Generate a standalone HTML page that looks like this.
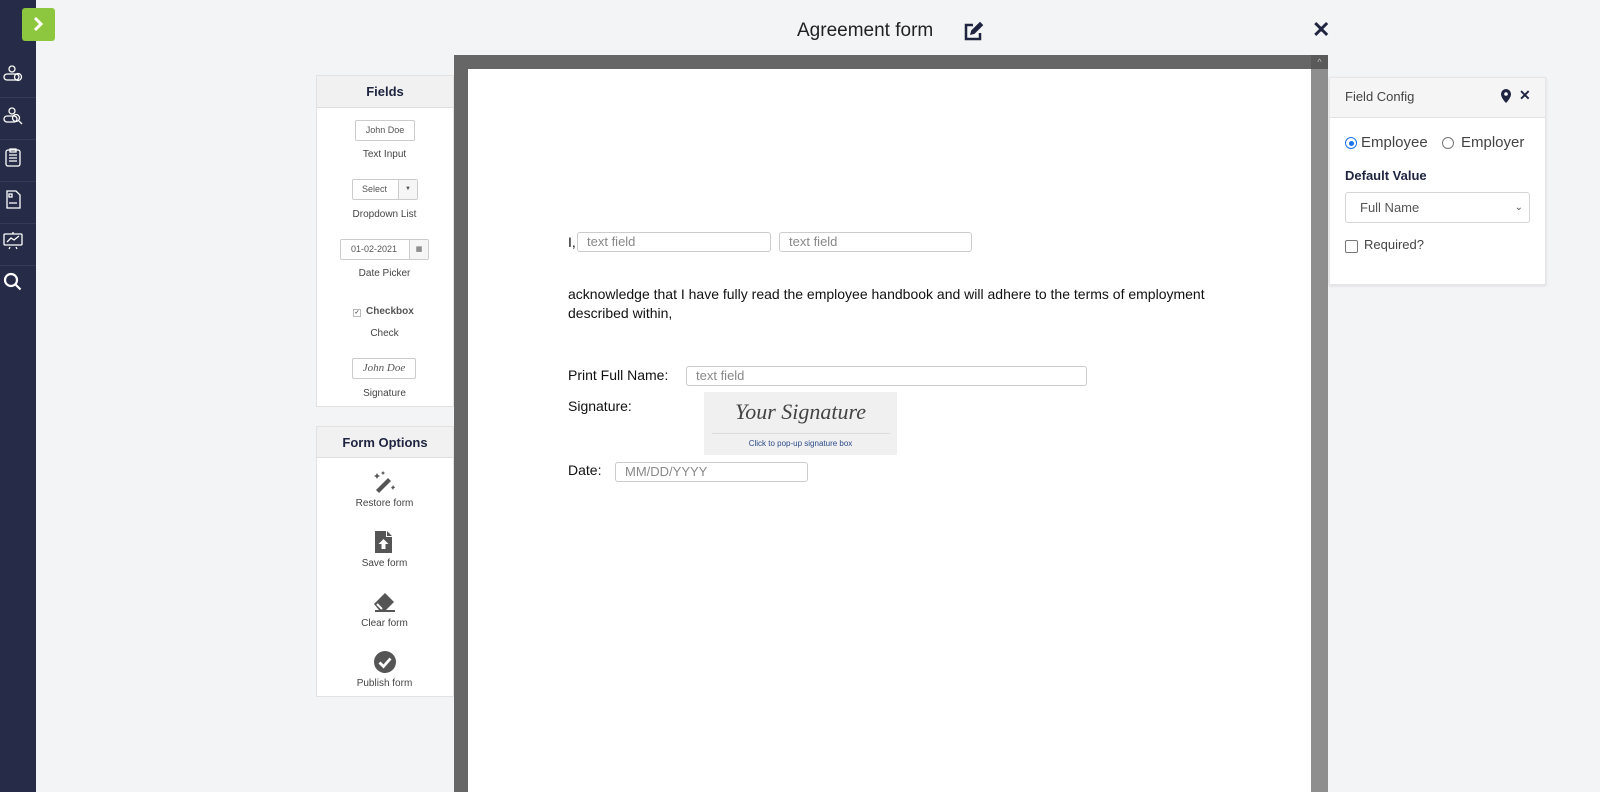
<!DOCTYPE html>
<html><head><style>
*{box-sizing:border-box;margin:0;padding:0}
body{width:1600px;height:792px;overflow:hidden;background:#f3f4f6;font-family:"Liberation Sans",sans-serif;position:relative;color:#333}
.abs{position:absolute}
.side{left:0;top:0;width:36px;height:792px;background:#262b47}
.sico{left:3px;width:20px;height:20px;stroke:#fff;fill:none;stroke-width:1.3}
.sep{left:0;width:36px;height:1px;background:#353a57}
.panel{background:#fff;border:1px solid #e2e2e2}
.ph{background:#f1f1f1;border-bottom:1px solid #ddd;text-align:center;font-size:13px;font-weight:bold;color:#1f2540}
.lbl{width:137px;text-align:center;font-size:10px;color:#444}
.mini{border:1px solid #ccc;border-radius:2px;background:#fff;font-size:9px;color:#555;text-align:center}
.mini span{position:absolute;top:0;right:0;height:19px;border-left:1px solid #ccc;background:#f6f6f6;text-align:center}
.tf{border:1px solid #ccc;border-radius:3px;font-size:13px;color:#888;padding-left:9px;height:20px;line-height:18px;background:#fff}
.doc{font-size:14px;color:#111}
</style></head><body>
<div class="abs side"></div>
<div class="abs" style="left:22px;top:8px;width:33px;height:33px;background:#8dc63f;border-radius:3px"></div>
<svg class="abs" style="left:28px;top:14px" width="20" height="20" viewBox="0 0 20 20"><path d="M7 4l6 6-6 6" stroke="#fff" stroke-width="3" fill="none"/></svg>
<svg class="abs sico" style="top:64px" viewBox="0 0 20 20"><circle cx="9" cy="5" r="3"/><rect x="1" y="10" width="15" height="6" rx="3"/><circle cx="15" cy="13" r="3.5"/></svg>
<div class="abs sep" style="top:97px"></div>
<svg class="abs sico" style="top:106px" viewBox="0 0 20 20"><circle cx="9" cy="5" r="3"/><rect x="1" y="10" width="13" height="6" rx="3"/><circle cx="13" cy="12" r="3.5"/><path d="M16 15l3 3"/></svg>
<div class="abs sep" style="top:139px"></div>
<svg class="abs sico" style="top:147px" viewBox="0 0 20 20"><rect x="3" y="3" width="14" height="16" rx="2"/><path d="M7 2h6v3H7zM6 8h8M6 11h8M6 14h8"/></svg>
<div class="abs sep" style="top:181px"></div>
<svg class="abs sico" style="top:189px" viewBox="0 0 20 20"><path d="M4 2h9l4 4v13H4z"/><path d="M6 5h3v3H6zM6 14h8"/></svg>
<div class="abs sep" style="top:223px"></div>
<svg class="abs sico" style="top:230px" viewBox="0 0 20 20"><rect x="1" y="4" width="18" height="11" rx="1"/><path d="M4 12l4-4 3 2 5-4M7 17l-1 2M13 17l1 2M10 2v2"/></svg>
<div class="abs sep" style="top:265px"></div>
<svg class="abs sico" style="top:272px;stroke-width:2.2" viewBox="0 0 20 20"><circle cx="8" cy="8" r="6"/><path d="M12.5 12.5l5 5"/></svg>

<div class="abs" style="left:797px;top:20px;font-size:19px;color:#222">Agreement form</div>
<svg class="abs" style="left:963px;top:21px" width="22" height="20" viewBox="0 0 22 20"><path d="M10 4H3v14h14v-6" stroke="#1f2540" stroke-width="2.5" fill="none"/><path d="M7 14l1.2-4.5L17 0.8l3.3 3.3-8.8 8.8z" fill="#1f2540"/></svg>
<div class="abs" style="left:1312px;top:17px;font-size:22px;font-weight:bold;color:#1f2540">✕</div>

<div class="abs" style="left:454px;top:55px;width:874px;height:737px;background:#666"></div>
<div class="abs" style="left:1311px;top:55px;width:17px;height:737px;background:#8e8e8e"></div>
<div class="abs" style="left:1311px;top:55px;width:17px;height:14px;background:#5a5a5a;color:#bbb;font-size:9px;text-align:center;line-height:14px">^</div>
<div class="abs" style="left:468px;top:69px;width:843px;height:723px;background:#fff"></div>

<div class="abs doc" style="left:568px;top:234px">I,</div>
<div class="abs tf" style="left:577px;top:232px;width:194px">text field</div>
<div class="abs tf" style="left:779px;top:232px;width:193px">text field</div>
<div class="abs doc" style="left:568px;top:285px;line-height:19px;width:680px">acknowledge that I have fully read the employee handbook and will adhere to the terms of employment described within,</div>
<div class="abs doc" style="left:568px;top:367px">Print Full Name:</div>
<div class="abs tf" style="left:686px;top:366px;width:401px">text field</div>
<div class="abs doc" style="left:568px;top:398px">Signature:</div>
<div class="abs" style="left:704px;top:392px;width:193px;height:63px;background:#f0f0f0"></div>
<div class="abs" style="left:704px;top:399px;width:193px;text-align:center;font-family:'Liberation Serif',serif;font-style:italic;font-size:22px;color:#444">Your Signature</div>
<div class="abs" style="left:712px;top:433px;width:178px;height:1px;background:#ddd"></div>
<div class="abs" style="left:704px;top:439px;width:193px;text-align:center;font-size:8px;color:#2b4a8a">Click to pop-up signature box</div>
<div class="abs doc" style="left:568px;top:462px">Date:</div>
<div class="abs tf" style="left:615px;top:462px;width:193px">MM/DD/YYYY</div>

<div class="abs panel" style="left:316px;top:75px;width:138px;height:332px"></div>
<div class="abs ph" style="left:317px;top:76px;width:136px;height:32px;line-height:32px">Fields</div>
<div class="abs mini" style="left:355px;top:120px;width:60px;height:21px;line-height:19px">John Doe</div>
<div class="abs lbl" style="left:316px;top:149px">Text Input</div>
<div class="abs mini" style="left:352px;top:179px;width:66px;height:21px;line-height:19px;text-align:left;padding-left:9px">Select<span style="width:19px;font-size:6px">▼</span></div>
<div class="abs lbl" style="left:316px;top:209px">Dropdown List</div>
<div class="abs mini" style="left:340px;top:239px;width:89px;height:21px;line-height:19px;text-align:left;padding-left:10px">01-02-2021<span style="width:19px;font-size:7px">▦</span></div>
<div class="abs lbl" style="left:316px;top:268px">Date Picker</div>
<div class="abs" style="left:353px;top:306px;font-size:10px;color:#555;font-weight:bold"><span style="display:inline-block;width:8px;height:8px;border:1px solid #bbb;font-size:6px;line-height:7px;text-align:center;margin-right:5px;vertical-align:0">✓</span>Checkbox</div>
<div class="abs lbl" style="left:316px;top:328px">Check</div>
<div class="abs mini" style="left:352px;top:358px;width:64px;height:21px;line-height:19px;font-family:'Liberation Serif',serif;font-style:italic;font-size:11px">John Doe</div>
<div class="abs lbl" style="left:316px;top:388px">Signature</div>

<div class="abs panel" style="left:316px;top:426px;width:138px;height:271px"></div>
<div class="abs ph" style="left:317px;top:427px;width:136px;height:31px;line-height:31px">Form Options</div>
<svg class="abs" style="left:373px;top:470px" width="24" height="24" viewBox="0 0 24 24" fill="#555"><path d="M3 20l12-12 3 3-12 12z"/><path d="M4 3l1 2 2 1-2 1-1 2-1-2-2-1 2-1zM10 1l.7 1.3L12 3l-1.3.7L10 5l-.7-1.3L8 3l1.3-.7zM20 15l.8 1.5 1.5.8-1.5.8L20 20l-.8-1.5-1.5-.8 1.5-.8z"/></svg>
<div class="abs lbl" style="left:316px;top:498px">Restore form</div>
<svg class="abs" style="left:374px;top:530px" width="20" height="24" viewBox="0 0 20 24" fill="#555"><path d="M1 1h11v6h6v16H1z"/><path d="M13 1l5 5h-5z"/><path d="M9.5 9l5 5h-3v5h-4v-5h-3z" fill="#fff"/></svg>
<div class="abs lbl" style="left:316px;top:558px">Save form</div>
<svg class="abs" style="left:372px;top:591px" width="26" height="22" viewBox="0 0 26 22" fill="#555"><path d="M2 13L13 2l9 9-8 8H7z"/><path d="M5 13l5 5" stroke="#fff" stroke-width="2"/><path d="M3 19h20v2H3z"/></svg>
<div class="abs lbl" style="left:316px;top:618px">Clear form</div>
<svg class="abs" style="left:373px;top:650px" width="24" height="24" viewBox="0 0 24 24"><circle cx="12" cy="12" r="11" fill="#555"/><path d="M6.5 12.5l4 4 7-8" stroke="#fff" stroke-width="2.8" fill="none"/></svg>
<div class="abs lbl" style="left:316px;top:678px">Publish form</div>

<div class="abs" style="left:1329px;top:77px;width:217px;height:208px;background:#fff;border:1px solid #e6e6e6;box-shadow:0 1px 3px rgba(0,0,0,.1)"></div>
<div class="abs" style="left:1330px;top:78px;width:215px;height:40px;background:#f5f5f5;border-bottom:1px solid #e2e2e2"></div>
<div class="abs" style="left:1345px;top:89px;font-size:13px;color:#444">Field Config</div>
<svg class="abs" style="left:1500px;top:89px" width="12" height="15" viewBox="0 0 12 15"><path d="M6 0a5 5 0 0 1 5 5c0 4-5 9-5 9S1 9 1 5a5 5 0 0 1 5-5z" fill="#1f2540"/><circle cx="6" cy="5" r="1.8" fill="#fff"/></svg>
<div class="abs" style="left:1519px;top:87px;font-size:14px;font-weight:bold;color:#1f2540">✕</div>
<div class="abs" style="left:1345px;top:137px;width:12px;height:12px;border:1.5px solid #1a73e8;border-radius:50%"></div>
<div class="abs" style="left:1348.5px;top:140.5px;width:5px;height:5px;background:#1a73e8;border-radius:50%"></div>
<div class="abs" style="left:1361px;top:134px;font-size:15px;color:#444">Employee</div>
<div class="abs" style="left:1442px;top:137px;width:12px;height:12px;border:1.5px solid #777;border-radius:50%"></div>
<div class="abs" style="left:1461px;top:134px;font-size:15px;color:#444">Employer</div>
<div class="abs" style="left:1345px;top:168px;font-size:13px;font-weight:bold;color:#1f2540">Default Value</div>
<div class="abs" style="left:1345px;top:192px;width:185px;height:31px;border:1px solid #d5d5d5;border-radius:3px;font-size:13px;color:#555;padding-left:14px;line-height:29px">Full Name<span style="position:absolute;right:6px;top:0;font-size:10px">⌄</span></div>
<div class="abs" style="left:1345px;top:240px;width:13px;height:13px;border:1.5px solid #777;border-radius:2px"></div>
<div class="abs" style="left:1364px;top:237px;font-size:13px;color:#444">Required?</div>
</body></html>
